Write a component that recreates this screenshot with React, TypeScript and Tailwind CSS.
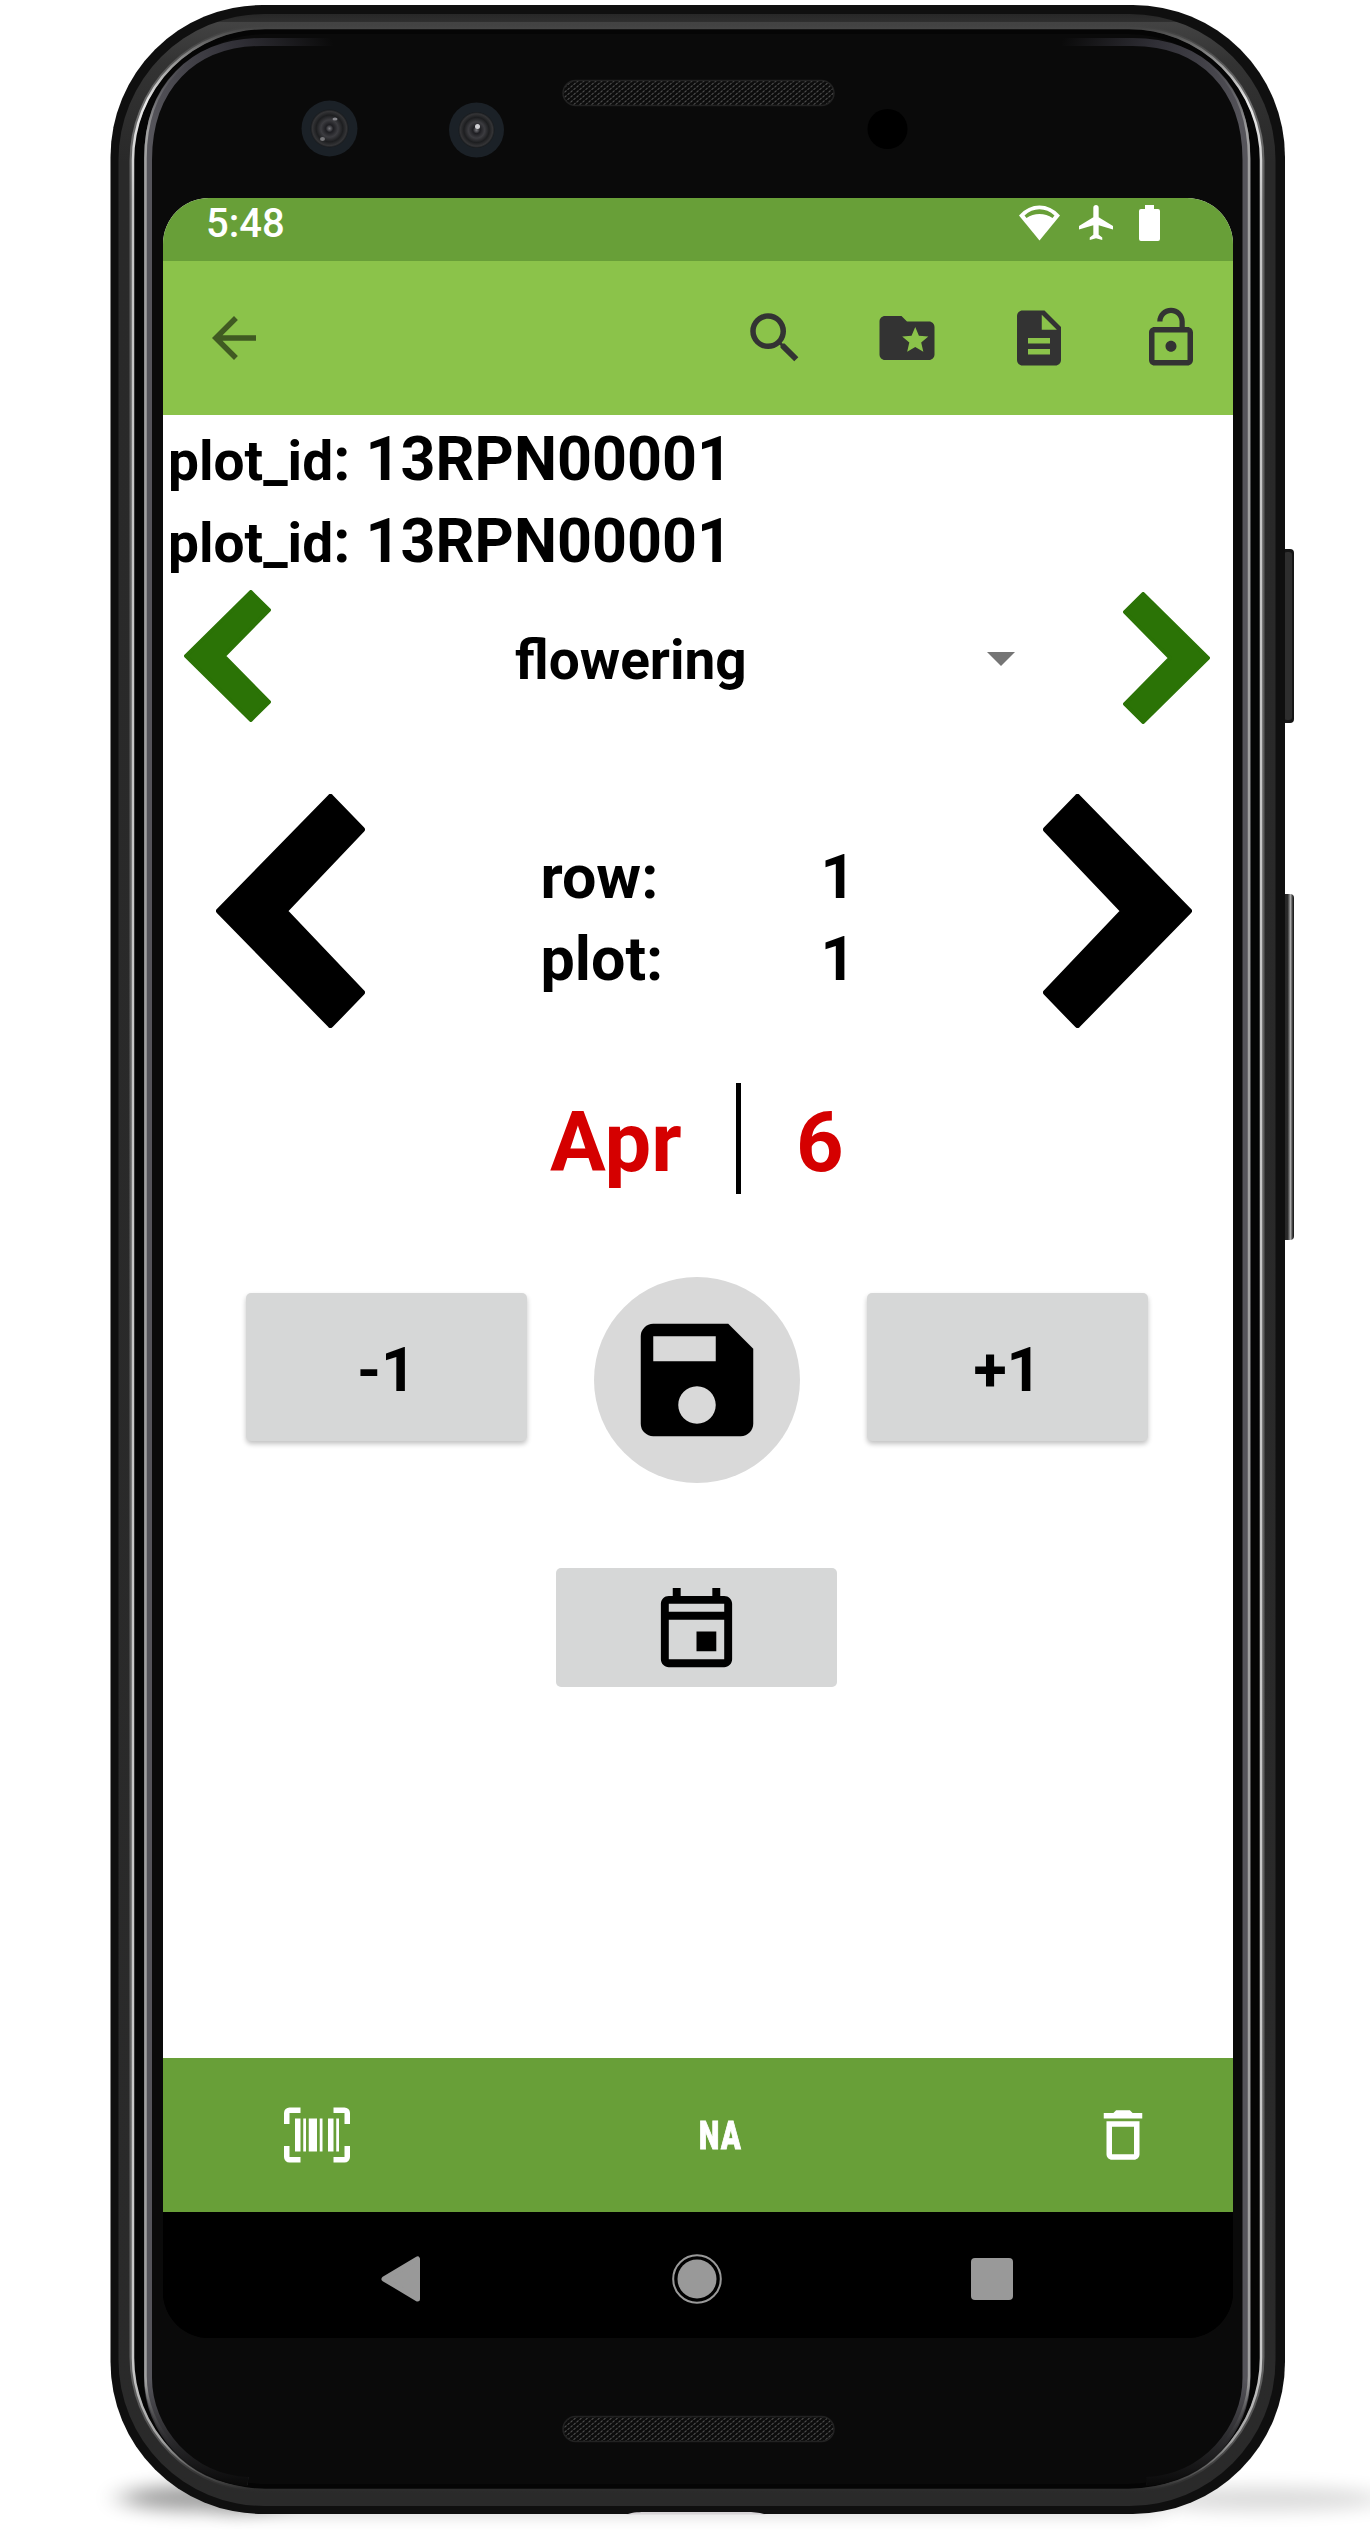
import type { ReactNode } from "react";
import { MdArrowBack, MdSearch, MdDescription, MdLockOpen, MdSave, MdDeleteOutline } from "react-icons/md";

const FONT = "font-['Roboto','Liberation_Sans',sans-serif]";

function DeviceFrame() {
  const glass =
    "M333 42 H262 C192 42 148 88 148 160 V2378 C148 2430 190 2478 248 2481";
  return (
    <svg
      className="pointer-events-none absolute inset-0"
      width="1370"
      height="2534"
      viewBox="0 0 1370 2534"
      aria-hidden="true"
    >
      <defs>
        <linearGradient id="rim" gradientUnits="userSpaceOnUse" x1="0" y1="28" x2="0" y2="2490">
          <stop offset="0" stopColor="#454545" />
          <stop offset="0.012" stopColor="#8a8a8a" />
          <stop offset="0.03" stopColor="#e8e8e8" />
          <stop offset="0.07" stopColor="#c4c4c4" />
          <stop offset="0.95" stopColor="#c8c8c8" />
          <stop offset="0.98" stopColor="#a0a0a0" />
          <stop offset="1" stopColor="#2c2c2c" />
        </linearGradient>
        <linearGradient id="band" gradientUnits="userSpaceOnUse" x1="0" y1="13" x2="0" y2="2506">
          <stop offset="0" stopColor="#262626" />
          <stop offset="0.0034" stopColor="#2e2e2e" />
          <stop offset="0.0036" stopColor="#434343" />
          <stop offset="0.02" stopColor="#333333" />
          <stop offset="0.06" stopColor="#292929" />
          <stop offset="1" stopColor="#2a2a2a" />
        </linearGradient>
        <linearGradient id="glass" gradientUnits="userSpaceOnUse" x1="333" y1="42" x2="148" y2="110">
          <stop offset="0" stopColor="#0a0a0a" />
          <stop offset="0.45" stopColor="#302f36" />
          <stop offset="1" stopColor="#55545a" />
        </linearGradient>
        <linearGradient id="edge" gradientUnits="userSpaceOnUse" x1="0" y1="60" x2="0" y2="2460">
          <stop offset="0" stopColor="#55555a" stopOpacity="0" />
          <stop offset="0.03" stopColor="#a0a0a0" />
          <stop offset="0.97" stopColor="#a0a0a0" />
          <stop offset="1" stopColor="#55555a" stopOpacity="0" />
        </linearGradient>
        <linearGradient id="tail" gradientUnits="userSpaceOnUse" x1="0" y1="2380" x2="0" y2="2484">
          <stop offset="0" stopColor="#0a0a0a" stopOpacity="0" />
          <stop offset="1" stopColor="#0a0a0a" />
        </linearGradient>
        <linearGradient id="key" x1="0" y1="0" x2="1" y2="0">
          <stop offset="0" stopColor="#1d1d1d" />
          <stop offset="0.55" stopColor="#2c2c2c" />
          <stop offset="0.75" stopColor="#a8a8a8" />
          <stop offset="0.9" stopColor="#3a3a3a" />
          <stop offset="1" stopColor="#111111" />
        </linearGradient>
        <pattern id="mesh" width="6" height="5" patternUnits="userSpaceOnUse">
          <rect width="6" height="5" fill="#0c0c0c" />
          <path d="M0.5 2.3l2 -1.8M3.5 4.800l2 -1.8" stroke="#4c4c4c" strokeWidth="1.1" />
        </pattern>
        <radialGradient id="lens">
          <stop offset="0" stopColor="#77777c" />
          <stop offset="0.2" stopColor="#1e1e22" />
          <stop offset="0.45" stopColor="#3c3c40" />
          <stop offset="0.7" stopColor="#1d1e20" />
          <stop offset="0.9" stopColor="#343436" />
          <stop offset="1" stopColor="#16191c" />
        </radialGradient>
        <filter id="soft" x="-30%" y="-100%" width="160%" height="300%">
          <feGaussianBlur stdDeviation="14 9" />
        </filter>
      </defs>

      <ellipse cx="205" cy="2498" rx="85" ry="13" fill="#000" opacity="0.38" filter="url(#soft)" />
      <ellipse cx="1265" cy="2499" rx="120" ry="12" fill="#000" opacity="0.14" filter="url(#soft)" />
      <rect x="220" y="2500" width="940" height="15" fill="#000" opacity="0.16" filter="url(#soft)" />

      <rect x="1280" y="549" width="14" height="174" rx="4" fill="#151515" />
      <rect x="1284" y="552" width="8" height="168" rx="3" fill="#2e2e2e" />
      <rect x="1280" y="894" width="14" height="346" rx="4" fill="url(#key)" />

      <rect x="110.500" y="5" width="1174.500" height="2509" rx="152" fill="#0f0f0f" />
      <path d="M626 2514.500C634 2512 640 2512 646 2512H746C754 2512 760 2512.500 766 2514.500z" fill="#d6d3d6" />
      <rect x="118.500" y="14" width="1157" height="2492" rx="146" fill="url(#band)" />
      <rect x="132.500" y="28" width="1129" height="2462" rx="133" fill="#050505" />
      <rect x="131.500" y="27" width="1131" height="2464" rx="134" fill="none" stroke="url(#rim)" strokeWidth="4" opacity="0.35" />
      <rect x="133" y="28" width="1128" height="2462" rx="132" fill="none" stroke="url(#rim)" strokeWidth="2.500" />
      <rect x="144" y="34" width="1106" height="2450" rx="122" fill="#0a0a0a" />
      <g fill="none">
        <path d={glass} stroke="url(#glass)" strokeWidth="8" />
        <path d={glass} transform="translate(-2.500 -2)" stroke="url(#edge)" strokeWidth="2.500" />
        <g transform="translate(1394.500 0) scale(-1 1)">
          <path d={glass} stroke="url(#glass)" strokeWidth="8" />
          <path d={glass} transform="translate(-2.500 -2)" stroke="url(#edge)" strokeWidth="2.500" />
        </g>
        <path d="M148 2378 C148 2430 190 2478 248 2481" stroke="url(#tail)" strokeWidth="10" />
        <path d="M1246.500 2378 C1246.500 2430 1204 2478 1146 2481" stroke="url(#tail)" strokeWidth="10" />
      </g>

      <rect x="563" y="80.500" width="271" height="25" rx="12.500" fill="url(#mesh)" stroke="#222" strokeWidth="1.500" />
      <rect x="563" y="2416.500" width="271" height="25" rx="12.500" fill="url(#mesh)" stroke="#222" strokeWidth="1.500" />

      <circle cx="329.500" cy="128.500" r="28" fill="#1b2127" />
      <circle cx="329.500" cy="128.500" r="19" fill="url(#lens)" />
      <ellipse cx="335" cy="119" rx="2.500" ry="1.500" fill="#85858a" />
      <ellipse cx="322.500" cy="139" rx="2.500" ry="2" fill="#77777a" />
      <circle cx="476.500" cy="130" r="27.500" fill="#1b2127" />
      <circle cx="476.500" cy="130" r="18" fill="url(#lens)" />
      <circle cx="477.500" cy="126.500" r="2.500" fill="#d0d0d4" />
      <circle cx="887.500" cy="129" r="20" fill="#000" />
    </svg>
  );
}

function Glyph({ d, size, className = "" }: { d: string; size: number; className?: string }) {
  return (
    <svg width={size} height={size} viewBox="0 0 24 24" fill="currentColor" className={className}>
      <path fillRule="evenodd" d={d} />
    </svg>
  );
}

const FOLDER_STAR =
  "M20 6h-8l-2-2H4c-1.1 0-2 .9-2 2v12c0 1.100.9 2 2 2h16c1.100 0 2-.9 2-2V8c0-1.100-.9-2-2-2zM17.940 17L15 15.280 12.060 17l.78-3.330-2.590-2.240 3.410-.29L15 8l1.340 3.140 3.410.29-2.590 2.240z";
const CALENDAR =
  "M17 12h-5v5h5zM16 1v2H8V1H6v2H5c-1.100 0-2 .9-2 2v14c0 1.100.9 2 2 2h14c1.100 0 2-.9 2-2V5c0-1.100-.9-2-2-2h-1V1zM19 5v2H5V5zM5 19V9h14v10z";
const BARCODE =
  "M4 6H6V18H4zM7 6H8V18H7zM9 6H12V18H9zM13 6H14V18H13zM16 6H18V18H16zM19 6H20V18H19zM2 4V8H0V4A2 2 0 0 1 2 2H6V4zM22 2A2 2 0 0 1 24 4V8H22V4H18V2zM2 16V20H6V22H2A2 2 0 0 1 0 20V16zM22 20V16H24V20A2 2 0 0 1 22 22H18V20z";

function Chevron({ className, flip = false }: { className: string; flip?: boolean }) {
  return (
    <svg viewBox="0 0 149 234" preserveAspectRatio="none" className={className}>
      <path
        transform={flip ? "translate(149 0) scale(-1 1)" : undefined}
        d="M3 117L114.500 3L146 35.500L68.500 117L146 198.500L114.500 231Z"
        fill="currentColor"
        stroke="currentColor"
        strokeWidth="6"
        strokeLinejoin="round"
      />
    </svg>
  );
}

function StatusBar() {
  return (
    <div className="flex h-[63px] items-start bg-[#689f38] pl-[43px] pr-[73px] text-white">
      <span className="mt-[6px] text-[40px] leading-[40px] font-medium">5:48</span>
      <div className="mt-[7px] ml-auto flex items-start">
        <svg width="41" height="36" viewBox="0 0 41 36">
          <path d="M20.500 35.500L0 10.500C12 -2.800 29 -2.800 41 10.500z" fill="#fff" />
          <path d="M5.500 10.500C14 2 27 2 35.500 10.500L33.500 13C26 7.500 15 7.500 7.500 13z" fill="#689f38" />
        </svg>
        <svg width="34" height="35" viewBox="2.500 2 19 20" preserveAspectRatio="none" className="ml-[19px]">
          <path d="M21.500 16v-2l-8-5V3.500c0-.83-.67-1.500-1.500-1.500s-1.500.67-1.500 1.500V9l-8 5v2l8-2.500V19l-2 1.500V22l3.500-1 3.500 1v-1.500l-2-1.500v-5.500z" fill="#fff" />
        </svg>
        <svg width="21" height="36" viewBox="0 0 21 36" className="ml-[26px]">
          <path d="M6 0h9v4h4a2 2 0 0 1 2 2v28a2 2 0 0 1-2 2H2a2 2 0 0 1-2-2V6a2 2 0 0 1 2-2h4z" fill="#fff" />
        </svg>
      </div>
    </div>
  );
}

function Toolbar() {
  return (
    <div className="flex h-[154px] items-center bg-[#8bc34a] pr-[29px] pl-[38px] text-[#333]">
      <MdArrowBack size={66} className="text-[#405a22]" />
      <div className="ml-auto flex gap-[66px]">
        <MdSearch size={66} />
        <Glyph d={FOLDER_STAR} size={66} />
        <MdDescription size={66} />
        <MdLockOpen size={66} />
      </div>
    </div>
  );
}

function PlotLine() {
  return (
    <div className="flex h-[82px] items-baseline pl-[5px] text-[61px] leading-[82px] font-bold whitespace-pre">
      <span className="text-[55px]">plot_id</span>
      <span>: 13RPN00001</span>
    </div>
  );
}

function PadButton({ children }: { children: ReactNode }) {
  return (
    <button className="flex h-[148px] w-[281px] items-center justify-center rounded-[5px] bg-[#d6d7d7] pt-[7px] text-[61px] font-bold shadow-[0_3px_5px_rgba(0,0,0,0.24)]">
      {children}
    </button>
  );
}

export default function App() {
  return (
    <div className={`relative flex h-[2534px] w-[1370px] overflow-hidden bg-white text-black ${FONT}`}>
      <DeviceFrame />
      <main className="relative mt-[198px] ml-[163px] flex h-[2140px] w-[1070px] flex-col overflow-hidden rounded-[46px] bg-linear-to-b from-white from-50% to-black to-50%">
        <StatusBar />
        <Toolbar />

        <div className="flex flex-1 flex-col bg-white">
          <section className="h-[164px] pt-[3px]">
            <PlotLine />
            <PlotLine />
          </section>

          <section className="flex h-[156px] items-start justify-between pt-[11px] pr-[23px] pl-[21px]">
            <Chevron className="h-[132px] w-[87px] text-[#2b7306]" />
            <div className="mt-[38px] ml-[136px] flex h-[65px] w-[500px] items-center justify-between">
              <span className="text-[55px] leading-[65px] font-bold">flowering</span>
              <svg width="28" height="14" viewBox="0 0 28 14" className="-mt-[4px]">
                <path d="M0 0h28L14 14z" fill="#757575" />
              </svg>
            </div>
            <Chevron flip className="mt-[2px] h-[132px] w-[87px] text-[#2b7306]" />
          </section>

          <section className="flex h-[312px] items-start justify-between pt-[59px] pr-[41px] pl-[53px]">
            <Chevron className="h-[234px] w-[149px]" />
            <dl className="mt-[42px] mr-[17px] grid w-[310px] grid-cols-[280px_1fr] text-[61px] leading-[82px] font-bold">
              <dt>row:</dt>
              <dd>1</dd>
              <dt>plot:</dt>
              <dd>1</dd>
            </dl>
            <Chevron flip className="h-[234px] w-[149px]" />
          </section>

          <section className="mt-[36px] flex h-[111px] items-center pl-[387px] text-[83px] leading-[111px] font-bold text-[#d50000]">
            <span className="w-[186px] pt-[8px]">Apr</span>
            <span className="h-[111px] w-[5px] bg-black" />
            <span className="ml-[55px] pt-[8px]">6</span>
          </section>

          <section className="mt-[83px] flex h-[206px] items-start justify-between pr-[85px] pl-[83px]">
            <div className="mt-[16px]">
              <PadButton>-1</PadButton>
            </div>
            <button className="flex size-[206px] items-center justify-center rounded-full bg-[#d9d9d9]">
              <MdSave size={150} />
            </button>
            <div className="mt-[16px]">
              <PadButton>+1</PadButton>
            </div>
          </section>

          <button className="mt-[85px] ml-[393px] flex h-[119px] w-[281px] items-center justify-center rounded-[5px] bg-[#d6d7d7] pt-[8px]">
            <Glyph d={CALENDAR} size={95} />
          </button>
        </div>

        <footer className="flex h-[154px] shrink-0 items-center bg-[#689f38] pr-[77px] pl-[121px] text-white">
          <Glyph d={BARCODE} size={66} />
          <span className="mt-[2px] ml-[349px] w-[60px] origin-left scale-x-[0.74] text-[39px] leading-[40px] font-black tracking-[2px] [-webkit-text-stroke:1px_white]">
            NA
          </span>
          <MdDeleteOutline size={66} className="ml-auto" />
        </footer>
        <nav className="flex h-[126px] shrink-0 items-center bg-black pt-[7px] pl-[218px] text-[#999]">
          <svg width="39" height="46" viewBox="0 0 39 46" fill="currentColor">
            <path d="M3 23L36.500 3V43z" stroke="currentColor" strokeWidth="5" strokeLinejoin="round" />
          </svg>
          <svg width="50" height="50" viewBox="0 0 50 50" className="ml-[252px]">
            <circle cx="25" cy="25" r="23.800" fill="none" stroke="currentColor" strokeWidth="2" />
            <circle cx="25" cy="25" r="19.500" fill="currentColor" />
          </svg>
          <div className="ml-[249px] size-[42px] rounded-[4px] bg-[#999]" />
        </nav>
      </main>
    </div>
  );
}
